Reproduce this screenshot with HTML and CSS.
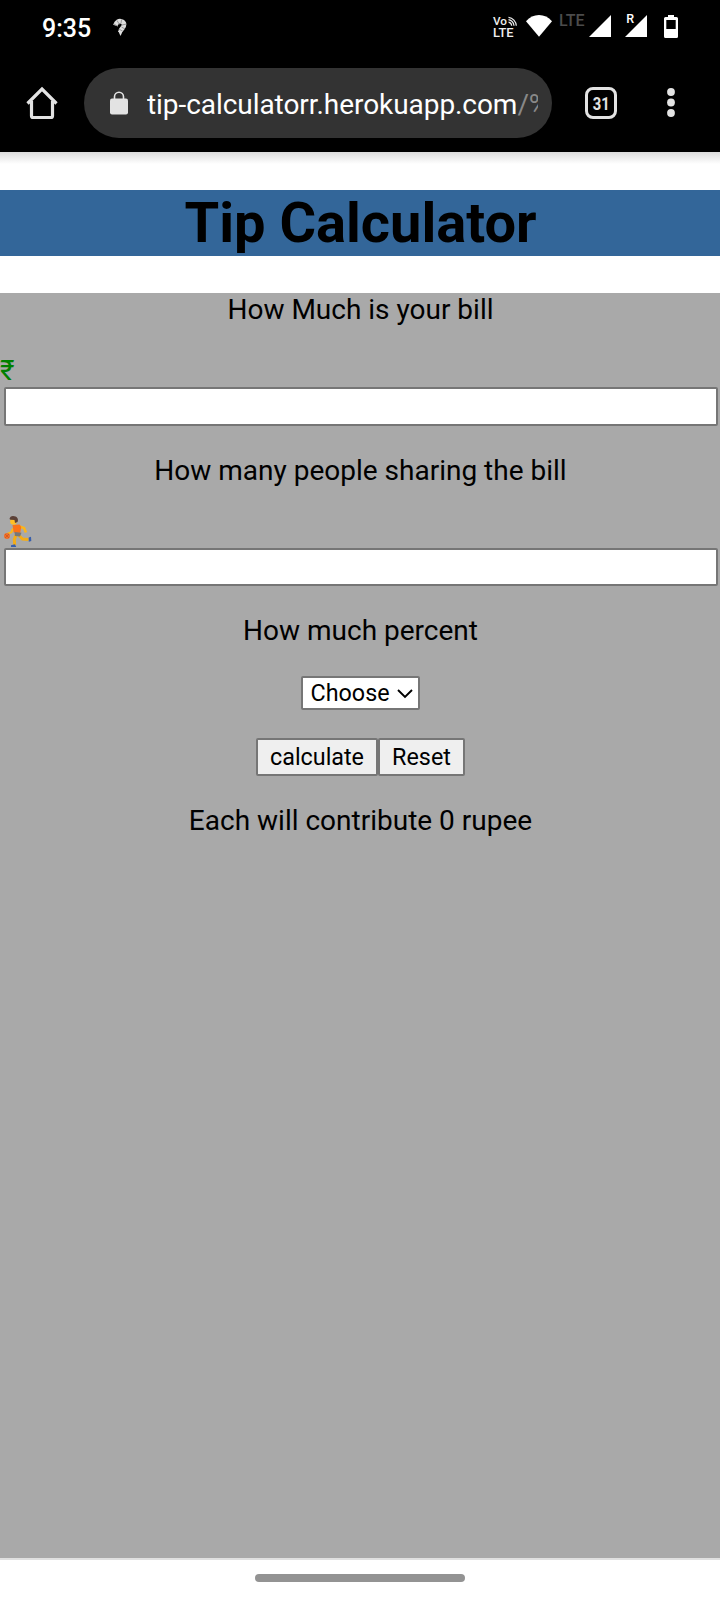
FILE: index.html
```html
<!DOCTYPE html>
<html lang="en">
<head>
<meta charset="utf-8">
<meta name="viewport" content="width=device-width">
<title>Tip Calculator</title>
<link rel="stylesheet" href="styles.css">
</head>
<body>
<div class="status">
  <time class="clock">9:35</time>
  <svg class="notice" viewBox="0 0 14 18"><path d="M2.300 7.500C3.500 4 6 2.500 8.500 3.500c3.500 1.300 3 4.500 1 6.500-1.200 1.200-2 2-2 4" fill="none" stroke="#dedede" stroke-width="4.600"/><path d="M5.200 13h4.600L7.500 18z" fill="#dedede"/><path d="M1 6l4 2.500M4 2.500l2.500 4M8.500 1.500l-.5 4M13.500 6L9 7M12 11L8.500 9M6 11l4 2.500" stroke="#777" stroke-width=".7"/></svg>
  <svg class="volte" viewBox="0 0 26 24"><g fill="#eee" font-family="Roboto" font-weight="500"><text x="0" y="8.700" font-size="11.500" textLength="14" lengthAdjust="spacingAndGlyphs">Vo</text><text x="0" y="20.700" font-size="12.500" textLength="20.500" lengthAdjust="spacingAndGlyphs">LTE</text></g><g fill="none" stroke="#eee" stroke-width="1.200"><path d="M15.500 6.200a4 4 0 0 1 3.200 3.500M15.500 3.700a7 7 0 0 1 5.500 6M15.500 1.300a9 9 0 0 1 7.800 8.400"/></g></svg>
  <svg class="wifi" viewBox="0 0 26 22"><path d="M0 6.200Q5.500 0 13 0t13 6.200L13 21.700z" fill="#fff"/></svg>
  <span class="lte">LTE</span>
  <svg class="signal" viewBox="0 0 22 22"><path d="M22 0v22H0z" fill="#fff"/></svg>
  <svg class="roaming" viewBox="0 0 22 24"><path d="M22 2v22H0z" fill="#fff"/><text x="1.300" y="10" font-family="Roboto" font-size="12.500" font-weight="500" fill="#fff" stroke="#000" stroke-width="2" paint-order="stroke">R</text></svg>
  <svg class="battery" viewBox="0 0 14 23"><path fill-rule="evenodd" d="M4 0h6v2h2.500Q14 2 14 3.500v18Q14 23 12.500 23h-11Q0 23 0 21.500v-18Q0 2 1.500 2H4zM2.300 5v9h9.400V5z" fill="#fff"/></svg>
</div>
<div class="toolbar">
  <svg class="home" viewBox="0 0 32 32"><path d="M1.500 16.500L16 2l14.500 14.500M5.500 14v15q0 1.500 1.500 1.500h18q1.500 0 1.500-1.500V14" fill="none" stroke="#e3e3e3" stroke-width="3.200"/></svg>
  <div class="address">
    <svg class="lock" viewBox="0 0 18 24"><path d="M4.500 9V5.700a4.500 4.500 0 0 1 9 0V9" fill="none" stroke="#e3e3e3" stroke-width="1.600"/><rect y="7.500" width="18" height="16" rx="2" fill="#e3e3e3"/></svg>
    <div class="url">tip-calculatorr.herokuapp.com<span class="path">/%</span></div>
  </div>
  <div class="tabs"><span class="count">31</span></div>
  <svg class="more" viewBox="0 0 8 29"><g fill="#e3e3e3"><circle cx="4" cy="4" r="3.900"/><circle cx="4" cy="14.500" r="3.900"/><circle cx="4" cy="25" r="3.900"/></g></svg>
</div>
<header class="masthead"><h1 class="title">Tip Calculator</h1></header>
<main class="content">
  <p class="label">How Much is your bill</p>
  <div class="symbol rupee">₹</div>
  <input class="field" type="text" aria-label="Bill">
  <p class="label people">How many people sharing the bill</p>
  <div class="symbol">
    <svg class="player" viewBox="0 0 28 32"><path d="M9 12.500L7.500 16.200l-4 1.500" fill="none" stroke="#fbb51c" stroke-width="2"/><path d="M15.500 10.500l4.500 1.500 2 4.500" fill="none" stroke="#fbb51c" stroke-width="2.600"/><path d="M12 19l-1.700 4.500.4 5.500M14.500 19l4 4 6 .4" fill="none" stroke="#f4ad17" stroke-width="3"/><path d="M8.500 9l7-.5 1.700 2.500-1 6-6.500-.5z" fill="#fb7218"/><path d="M10.500 16l7 .7-1.500 3.800-5-.5z" fill="#777"/><circle cx="9.500" cy="5.500" r="3.300" fill="#ffc025"/><path d="M5.500 3Q6 0 9 0c4 0 6 3 4.500 6L11 7l-.5-3-4-.2z" fill="#5b4138"/><circle cx="3" cy="20" r="3" fill="#ee702b"/><path d="M1 18l4 4M5 18l-4 4" stroke="#ca4b17" stroke-width=".6"/><path d="M7 29.300l4-1 1.200 2.700H7zM24.700 21.500l2.300-.8.300 4.300-2.500.7z" fill="#385fac"/></svg>
  </div>
  <input class="field second" type="text" aria-label="People">
  <p class="label percent">How much percent</p>
  <button class="control choice" aria-haspopup="listbox">Choose<svg class="chevron" viewBox="0 0 16 10"><path d="M1 1l7 7 7-7" fill="none" stroke="#000" stroke-width="1.900"/></svg></button>
  <div class="actions"><button class="control action calculate">calculate</button><button class="control action reset">Reset</button></div>
  <p class="label">Each will contribute 0 rupee</p>
</main>
<footer class="navigation"><div class="handle"></div></footer>
</body>
</html>
```
FILE: styles.css
```css
* { box-sizing: border-box; }
body { margin: 0; height: 1600px; display: flex; flex-direction: column; font: 28px/33px Roboto, sans-serif; color: #000; background: #fff; overflow: hidden; }
svg { display: block; flex: none; overflow: visible; }
.status { height: 60px; flex: none; display: flex; align-items: flex-start; padding-left: 42px; background: #000; }
.clock { width: 71px; margin-top: 12px; color: #fff; font-size: 25px; font-weight: 500; }
.notice { width: 14px; height: 18px; margin-top: 18px; }
.volte { width: 26px; height: 24px; margin: 16px 0 0 366px; }
.wifi { width: 26px; height: 22px; margin: 15px 0 0 7px; }
.lte { width: 28px; margin: 12px 0 0 7px; color: #4b4b4b; font: 500 16px/18px Roboto, sans-serif; }
.signal { width: 22px; height: 22px; margin: 15px 0 0 2px; }
.roaming { width: 22px; height: 24px; margin: 13px 0 0 14px; }
.battery { width: 14px; height: 23px; margin: 15px 0 0 17px; }
.toolbar { height: 92px; flex: none; display: flex; padding: 8px 0 0 26px; background: #000; }
.home { width: 32px; height: 32px; margin-top: 19px; }
.address { width: 468px; height: 70px; margin-left: 26px; padding: 0 14px 0 26px; display: flex; align-items: center; background: #333; border-radius: 35px; }
.lock { width: 18px; height: 24px; }
.url { flex: 1; min-width: 0; margin: 2px 0 0 19px; overflow: hidden; white-space: nowrap; color: #fff; font-size: 28px; letter-spacing: -.06px; }
.path { color: #888; }
.tabs { width: 32px; height: 32px; margin: 19px 0 0 33px; border: 3px solid #e3e3e3; border-radius: 8px; color: #e3e3e3; font-size: 18px; font-weight: 700; line-height: 27px; display: flex; justify-content: center; }
.count { transform: scaleX(.82); }
.more { width: 8px; height: 29px; margin: 20px 0 0 50px; }
.masthead { height: 141px; flex: none; padding-top: 38px; background: linear-gradient(#dcdcdc, #fff 12px); }
.title { margin: 0; height: 66px; padding-left: 1px; background: #336699; font-size: 56px; line-height: 66px; text-align: center; }
.content { flex: 1; display: flex; flex-direction: column; align-items: center; background: #a9a9a9; }
.label { margin: 0; height: 33px; padding-left: 1px; }
.symbol { width: 100%; height: 33px; margin-top: 28px; }
.rupee { color: #008000; }
.player { width: 28px; height: 32px; margin: 1px 0 0 4px; }
.field { width: 714px; height: 39px; margin: 0 2px 0 4px; border: 2px solid #767676; border-radius: 2px; outline: 0; background: #fff; font: inherit; }
.second { height: 38px; }
.people { margin-top: 28px; }
.percent { margin-top: 28px; }
.control { font: 23.333px/28px Roboto, sans-serif; color: #000; border: 2px solid #767676; border-radius: 2px; }
.choice { width: 119px; height: 34px; margin-top: 29px; padding: 0 5px 0 8px; display: flex; align-items: center; justify-content: space-between; background: #fff; }
.chevron { width: 16px; height: 10px; margin-top: 2px; }
.actions { display: flex; height: 38px; margin: 28px 0; }
.action { height: 38px; padding: 0 0 0 1px; background: #efefef; }
.calculate { width: 122px; }
.reset { width: 87px; }
.navigation { height: 42px; flex: none; border-top: 2px solid #e0e0e0; background: #fff; padding-top: 14px; }
.handle { width: 210px; height: 8px; margin: 0 auto; border-radius: 4px; background: #939393; }
```
